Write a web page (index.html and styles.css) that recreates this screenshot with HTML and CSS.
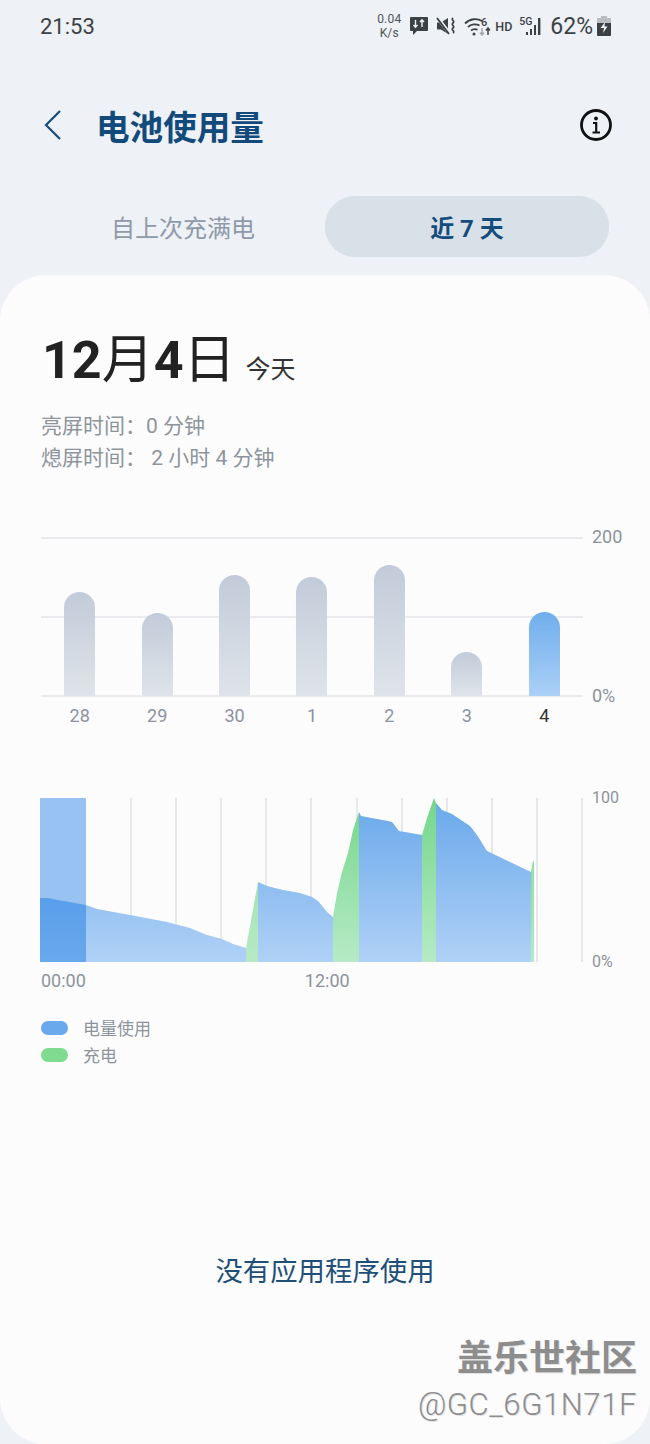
FILE: index.html
```html
<!DOCTYPE html>
<html lang="zh-CN">
  <head>
    <meta charset="UTF-8" />
    <meta name="viewport" content="width=device-width, initial-scale=1.0" />
    <title>电池使用量</title>
    <link rel="stylesheet" href="styles.css">
  </head>
  <body>
    <div class="status-bar">
      <span class="status-time">21:53</span>
      <div class="status-icons">
        <span class="net-speed">0.04<br>K/s</span>
        <svg class="ic-bubble" width="20" height="20" viewBox="0 0 20 20">
          <path d="M2 1h16a1 1 0 0 1 1 1v12a1 1 0 0 1-1 1H8l-4 4v-4H2a1 1 0 0 1-1-1V2a1 1 0 0 1 1-1z" fill="#3c4146" />
          <path d="M6.500 4v7M4.500 9l2 2.200 2-2.200M13 11V4M11 6l2-2.200L15 6" fill="none" stroke="#eef1f5" stroke-width="1.400" />
        </svg>
        <svg class="ic-mute" width="20" height="18" viewBox="0 0 20 18">
          <path d="M1 5.500h4l7-4.500v16l-7-4.500H1z" fill="#3c4146" />
          <path d="M1 0l13 17" stroke="#eef1f5" stroke-width="3.500" />
          <path d="M1 1l12 16" stroke="#3c4146" stroke-width="1.800" />
          <path d="M17 1c-2.500 2 2.500 3 0 5s2.500 3 0 5 2.500 3 0 5" fill="none" stroke="#3c4146" stroke-width="1.700" />
        </svg>
        <svg class="ic-wifi" width="27" height="19" viewBox="0 0 27 19">
          <path d="M1 6.500c5-5 12-5.500 17-2.500M4 10c3-3 8-3.500 11.500-1.500M7 13.500c2-1.500 4.500-1.800 6.500-.8" fill="none" stroke="#3c4146" stroke-width="1.800" />
          <circle cx="10" cy="17" r="1.500" fill="#3c4146" />
          <text x="17" y="9" class="ic-wifi-six">6</text>
          <path d="M18 11v7M16 15.500l2 2.500 2-2.500" fill="none" stroke="#a3a8ad" stroke-width="1.500" />
          <path d="M24 18v-7M22 13.500l2-2.500 2 2.500" fill="none" stroke="#3c4146" stroke-width="1.500" />
        </svg>
        <span class="hd">HD</span>
        <div class="signal">
          <span class="five-g">5G</span>
          <svg width="18" height="18" viewBox="0 0 18 18">
            <path d="M1 15h2v3H1zM5 12h2v6H5zM9 8h2v10H9zM13 1h2.400v17H13z" fill="#3c4146" />
          </svg>
        </div>
        <span class="battery-pct">62%</span>
        <svg class="ic-battery" width="14" height="20" viewBox="0 0 14 20">
          <path d="M4 0h6v2h3a1 1 0 0 1 1 1v16a1 1 0 0 1-1 1H1a1 1 0 0 1-1-1V3a1 1 0 0 1 1-1h3z" fill="#b9bdc1" />
          <path d="M0 7h14v12a1 1 0 0 1-1 1H1a1 1 0 0 1-1-1z" fill="#3c4146" />
          <path d="M8 6L3.500 12H7l-1 5 4.500-6.500H7.500z" fill="#eef1f5" />
        </svg>
      </div>
    </div>

    <header class="title-bar">
      <svg class="back" width="20" height="32" viewBox="0 0 20 32">
        <path d="M17 2L3 16l14 14" fill="none" stroke="#144c7c" stroke-width="2.200" />
      </svg>
      <h1>电池使用量</h1>
      <svg class="info" width="32" height="32" viewBox="0 0 32 32">
        <circle cx="16" cy="16" r="14.500" fill="none" stroke="#111" stroke-width="2.800" />
        <circle cx="16" cy="9.500" r="1.900" fill="#111" />
        <path d="M13 14h3.200v9.500M12.500 23.500h7.500" fill="none" stroke="#111" stroke-width="2.200" />
      </svg>
    </header>

    <div class="tabs">
      <div class="tab">自上次充满电</div>
      <div class="tab tab-active">近 7 天</div>
    </div>

    <main class="card">
      <div class="date-row">
        <span class="date"><b>12</b>月<b>4</b>日</span>
        <span class="today">今天</span>
      </div>
      <p class="screen-time">亮屏时间：0 分钟</p>
      <p class="screen-time">熄屏时间： 2 小时 4 分钟</p>

      <section class="bar-chart">
        <div class="bar-plot">
          <div class="grid-lines">
            <i></i><i></i><i></i>
          </div>
          <div class="bars">
            <div class="bar" style="height: 104px"></div>
            <div class="bar" style="height: 83px"></div>
            <div class="bar" style="height: 121px"></div>
            <div class="bar" style="height: 119px"></div>
            <div class="bar" style="height: 131px"></div>
            <div class="bar" style="height: 44px"></div>
            <div class="bar bar-today" style="height: 84px"></div>
          </div>
        </div>
        <div class="y-labels">
          <span>200</span>
          <span>0%</span>
        </div>
        <div class="x-labels">
          <span>28</span><span>29</span><span>30</span><span>1</span><span>2</span><span>3</span><span class="x-today">4</span>
        </div>
      </section>

      <section class="area-chart">
        <svg class="area-plot" width="544" height="165" viewBox="40 798 544 165">
          <defs>
            <linearGradient id="blue" gradientUnits="userSpaceOnUse" x1="0" y1="798" x2="0" y2="962">
              <stop offset="0" stop-color="#68a8ea" />
              <stop offset="1" stop-color="#b0d1f6" />
            </linearGradient>
            <linearGradient id="green" gradientUnits="userSpaceOnUse" x1="0" y1="798" x2="0" y2="962">
              <stop offset="0" stop-color="#74d68b" />
              <stop offset="1" stop-color="#b6eac5" />
            </linearGradient>
            <linearGradient id="green-low" gradientUnits="userSpaceOnUse" x1="0" y1="882" x2="0" y2="962">
              <stop offset="0" stop-color="#a5e3b5" />
              <stop offset="1" stop-color="#b6eac5" />
            </linearGradient>
          </defs>
          <path class="v-grid" d="M131 798v164M176 798v164M221 798v164M266 798v164M311 798v164M357 798v164M402 798v164M447 798v164M492 798v164M537 798v164M582 798v164" />
          <path fill="url(#blue)" d="M40 898L47 898L86 905L97 909L130 915L167 922L190 928L207 935L222 939L233 944L246 948V962H40Z" />
          <path fill="url(#green-low)" d="M246 948L258 882V962H246Z" />
          <path fill="url(#blue)" d="M258 882L267 886L283 890L300 893L312 897L318 901L323 907L327 912L333 917V962H258Z" />
          <path fill="url(#green)" d="M333 917L337 893L342 872L348 853L353 830L359 812V962H333Z" />
          <path fill="url(#blue)" d="M359 812L361 816L388 821L392 822L399 831L422 835V962H359Z" />
          <path fill="url(#green)" d="M422 835L427 818L434 798L436 803V962H422Z" />
          <path fill="url(#blue)" d="M436 803L442 810L452 814L470 826L477 835L487 851L531 872V962H436Z" />
          <path fill="url(#green)" d="M531 872L533 861L534 862V962H531Z" />
          <rect class="now-block" x="40" y="798" width="46" height="164" />
        </svg>
        <div class="area-y-labels">
          <span>100</span>
          <span>0%</span>
        </div>
        <div class="area-x-labels">
          <span>00:00</span>
          <span>12:00</span>
        </div>
      </section>

      <ul class="legend">
        <li><i class="swatch swatch-use"></i>电量使用</li>
        <li><i class="swatch swatch-charge"></i>充电</li>
      </ul>

      <p class="no-apps">没有应用程序使用</p>
    </main>

    <div class="watermark">
      <div class="wm-title">盖乐世社区</div>
      <div class="wm-user">@GC_6G1N71F</div>
    </div>
  </body>
</html>
```

FILE: styles.css
```css
* {
  box-sizing: border-box;
}

body {
  position: relative;
  width: 650px;
  height: 1444px;
  margin: 0;
  overflow: hidden;
  background-color: #eef1f5;
  font-family: Roboto, "Noto Sans CJK SC", sans-serif;
  color: #8c939b;
}

/* 状态栏 */
.status-bar {
  display: flex;
  justify-content: space-between;
  align-items: center;
  height: 52px;
  padding: 0 39px 0 40px;
  color: #3c4146;
}

.status-time {
  font-size: 22px;
}

.status-icons {
  display: flex;
  align-items: center;
}

.net-speed {
  width: 26px;
  font-size: 12px;
  line-height: 14px;
  letter-spacing: 0.200px;
  text-align: center;
  color: #50555a;
}

.ic-bubble {
  margin-left: 7px;
}

.ic-mute {
  margin-left: 7px;
}

.ic-wifi {
  margin-left: 8px;
}

.ic-wifi-six {
  font-size: 11px;
  font-weight: 500;
  fill: #3c4146;
}

.hd {
  margin-left: 4px;
  font-size: 12.500px;
  font-weight: 500;
}

.signal {
  display: flex;
  align-items: flex-start;
  margin-left: 7px;
}

.five-g {
  width: 6px;
  font-size: 10.500px;
  line-height: 9px;
  font-weight: 500;
}

.battery-pct {
  margin-left: 7px;
  font-size: 23px;
}

.ic-battery {
  margin-left: 4px;
}

/* 标题 */
.title-bar {
  display: flex;
  align-items: center;
  height: 144px;
  padding: 2px 38px 0 43px;
}

.title-bar h1 {
  flex: 1;
  margin: 0 0 0 33px;
  font-size: 33.600px;
  font-weight: 700;
  color: #134a7c;
}

/* 选项卡 */
.tabs {
  display: flex;
  gap: 0;
  height: 61px;
  margin: 0 41px;
}

.tab {
  display: flex;
  flex: 1;
  justify-content: center;
  align-items: center;
  font-size: 24px;
  color: #8f9aa8;
}

.tab-active {
  border-radius: 30px;
  background-color: #d8e0e8;
  font-weight: 700;
  color: #144c7c;
}

/* 卡片 */
.card {
  height: 1169px;
  margin-top: 18px;
  padding: 48px 41px 0;
  border-radius: 46px;
  background-color: #fcfcfd;
}

.date-row {
  display: flex;
  align-items: baseline;
  height: 76px;
  padding-left: 1px;
}

.date {
  font-size: 52px;
  line-height: 76px;
  font-weight: 400;
  color: #222;
}

.date b {
  font-weight: 700;
}

.today {
  margin-left: 10px;
  font-size: 25px;
  color: #333;
}

.screen-time {
  height: 32px;
  margin: 0;
  font-size: 21px;
  line-height: 32px;
  color: #8e949b;
}

.date-row + .screen-time {
  margin-top: 11px;
}

/* 柱状图 */
.bar-chart {
  display: grid;
  grid-template-columns: 542px 1fr;
  margin-top: 63px;
}

.bar-plot {
  display: grid;
  height: 160px;
}

.grid-lines,
.bars {
  grid-area: 1 / 1;
}

.grid-lines {
  display: flex;
  flex-direction: column;
  justify-content: space-between;
}

.grid-lines i {
  display: block;
  height: 2px;
  background-color: #e9ebee;
}

.bars {
  display: grid;
  grid-template-columns: repeat(7, 1fr);
  align-items: end;
  justify-items: center;
  padding-bottom: 1px;
}

.bar {
  width: 31px;
  border-radius: 15.500px 15.500px 0 0;
  background: linear-gradient(#c2cbd9, #dfe4ea);
}

.bar-today {
  background: linear-gradient(#70aeec, #abd0f6);
}

.y-labels {
  display: flex;
  flex-direction: column;
  justify-content: space-between;
  height: 179px;
  padding-left: 9px;
  margin-top: -10px;
  margin-bottom: -9px;
  font-size: 18px;
  line-height: 20px;
}

.x-labels {
  display: grid;
  grid-template-columns: repeat(7, 1fr);
  height: 28px;
  padding-top: 8px;
  font-size: 18px;
  line-height: 22px;
  text-align: center;
}

.x-today {
  color: #333;
}

/* 电量曲线 */
.area-chart {
  display: grid;
  grid-template-columns: 542px 1fr;
  margin-top: 73px;
}

.area-plot {
  display: block;
  margin-left: -1px;
}

.v-grid {
  fill: none;
  stroke: #e6e8ea;
  stroke-width: 2;
}

.now-block {
  fill: #006bde;
  opacity: 0.4;
}

.area-y-labels {
  display: flex;
  flex-direction: column;
  justify-content: space-between;
  height: 184px;
  margin-top: -10px;
  padding-left: 9px;
  font-size: 16px;
  line-height: 20px;
}

.area-x-labels {
  display: flex;
  gap: 219px;
  height: 34px;
  margin-top: -2px;
  font-size: 18px;
  line-height: 22px;
}

/* 图例 */
.legend {
  margin: 10px 0 0;
  padding: 0;
  list-style: none;
  font-size: 17px;
}

.legend li {
  display: flex;
  align-items: center;
  height: 27px;
}

.swatch {
  width: 27px;
  height: 14px;
  margin-right: 15px;
  border-radius: 7px;
}

.swatch-use {
  background-color: #6aa9ec;
}

.swatch-charge {
  background-color: #7edb90;
}

.no-apps {
  margin: 186px 0 0;
  font-size: 27.400px;
  line-height: 36px;
  text-align: center;
  color: #1e4f78;
}

/* 水印 */
.watermark {
  position: absolute;
  right: 13px;
  top: 1336px;
  text-align: right;
  color: #8d8d8d;
  text-shadow: 1px 1px 0 #e2e2e2;
}

.wm-title {
  font-size: 36px;
  line-height: 46px;
  font-weight: 700;
}

.wm-user {
  margin-top: 3px;
  font-size: 31px;
  line-height: 40px;
  font-weight: 300;
  letter-spacing: 0.600px;
}
```
